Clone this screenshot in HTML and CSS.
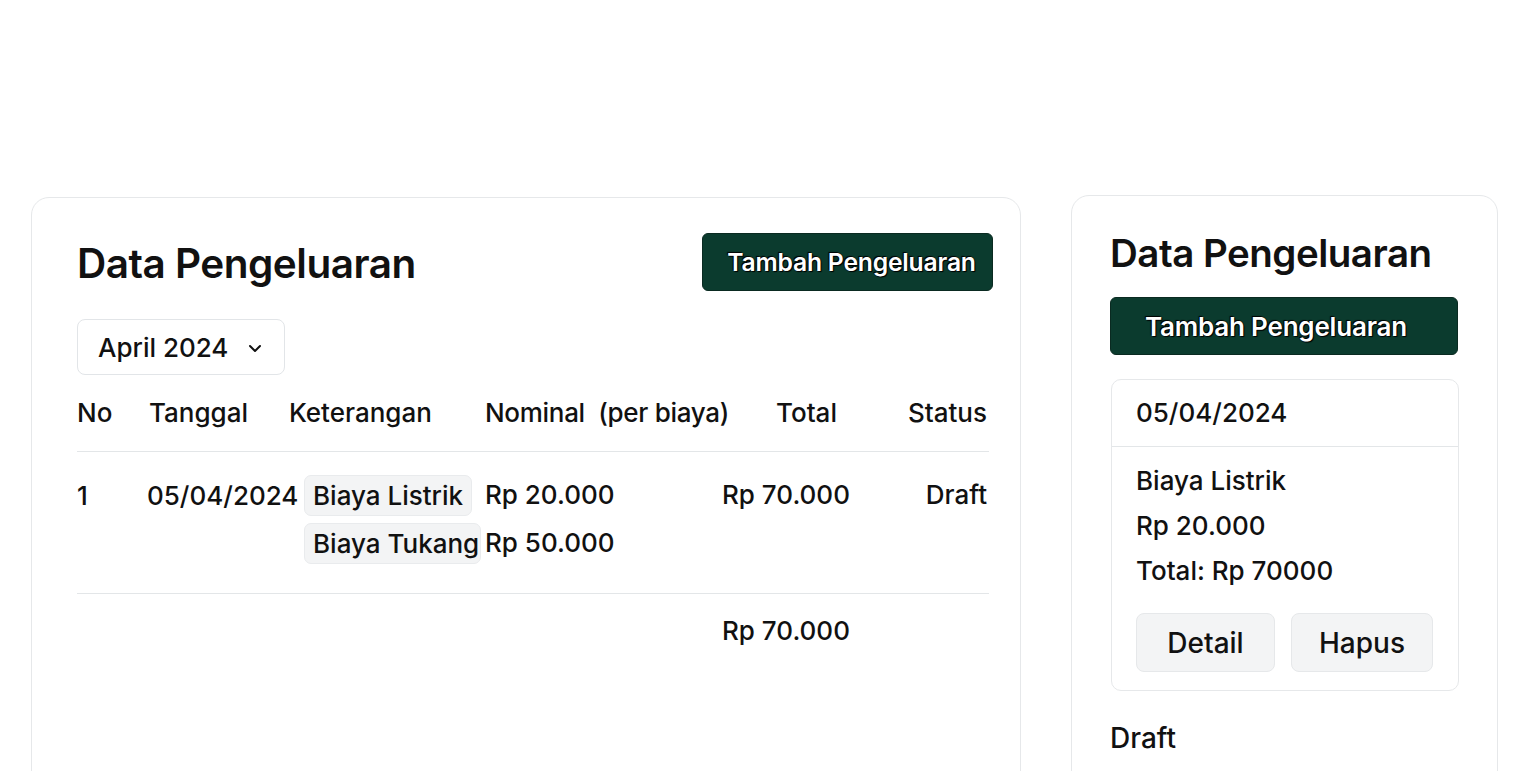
FILE: index.html
```html
<!DOCTYPE html>
<html lang="id">
<head>
<meta charset="utf-8">
<title>Data Pengeluaran</title>
<link rel="stylesheet" href="styles.css">
</head>
<body>
<div class="page">
  <section class="card main-card">
    <div class="card-head">
      <h1 class="title">Data Pengeluaran</h1>
      <button class="btn-primary">Tambah Pengeluaran</button>
    </div>
    <div class="month-select">
      <span>April 2024</span>
      <svg class="chev" width="18" height="18" viewBox="0 0 18 18"><path d="M4 7l5 5 5-5" fill="none" stroke="#111" stroke-width="2" stroke-linecap="round" stroke-linejoin="round"/></svg>
    </div>
    <table class="tbl">
      <colgroup>
        <col class="c-no"><col class="c-date"><col class="c-desc"><col class="c-nom"><col class="c-total"><col class="c-status">
      </colgroup>
      <thead>
        <tr>
          <th>No</th>
          <th>Tanggal</th>
          <th>Keterangan</th>
          <th class="th-nom">Nominal&nbsp; (per biaya)</th>
          <th class="th-total">Total</th>
          <th class="right">Status</th>
        </tr>
      </thead>
      <tbody>
        <tr class="row">
          <td>1</td>
          <td class="date">05/04/2024</td>
          <td class="desc">
            <span class="chip">Biaya Listrik</span>
            <span class="chip">Biaya Tukang</span>
          </td>
          <td class="nom">
            <div class="line">Rp 20.000</div>
            <div class="line">Rp 50.000</div>
          </td>
          <td class="total"><div class="line">Rp 70.000</div></td>
          <td class="right"><div class="line">Draft</div></td>
        </tr>
        <tr class="foot">
          <td></td><td></td><td></td><td></td>
          <td class="total">Rp 70.000</td>
          <td></td>
        </tr>
      </tbody>
    </table>
  </section>

  <aside class="card side-card">
    <h2 class="title side-title">Data Pengeluaran</h2>
    <button class="btn-primary btn-wide">Tambah Pengeluaran</button>
    <div class="item">
      <div class="item-date">05/04/2024</div>
      <div class="item-body">
        <div class="item-line">Biaya Listrik</div>
        <div class="item-line">Rp 20.000</div>
        <div class="item-line">Total: Rp 70000</div>
        <div class="item-actions">
          <button class="btn-soft btn-detail">Detail</button>
          <button class="btn-soft btn-hapus">Hapus</button>
        </div>
      </div>
    </div>
    <div class="side-status">Draft</div>
  </aside>
</div>
</body>
</html>
```

FILE: styles.css
```css
* { box-sizing: border-box; }
html, body { margin: 0; padding: 0; background: #fff; }
body {
  font-family: Inter, "Noto Sans", "Liberation Sans", sans-serif;
  color: #111;
  overflow: hidden;
}
.page {
  display: flex;
  align-items: flex-start;
  gap: 50px;
  padding: 195px 0 0 31px;
}
.card {
  background: #fff;
  border: 1px solid #e6e8ea;
  border-radius: 18px;
}
.main-card {
  width: 990px;
  height: 620px;
  padding: 35px 27px 0 45px;
  margin-top: 2px;
}
.card-head {
  display: flex;
  align-items: center;
  justify-content: space-between;
}
.title {
  margin: 0;
  font-size: 40.5px;
  font-weight: 600;
  letter-spacing: -0.5px;
  padding-top: 2px;
}
.btn-primary {
  font-family: inherit;
  background: #0b3b2e;
  border: 1px solid #0a2a21;
  border-radius: 6px;
  color: #fff;
  font-size: 24.7px;
  font-weight: 600;
  height: 58px;
  width: 291px;
  padding: 0 0 0 8px;
  text-shadow: 0 0 1px #000, 1px 1px 1px #000, -1px -1px 1px #000;
  letter-spacing: -0.2px;
}
.month-select {
  margin-top: 28px;
  width: 208px;
  height: 56px;
  border: 1px solid #e2e5e8;
  border-radius: 8px;
  display: flex;
  align-items: center;
  padding: 0 20px 0 20px;
  justify-content: space-between;
  font-size: 26px;
  font-weight: 500;
}
.chev { margin-top: 2px; }
.tbl {
  margin-top: 14px;
  border-collapse: collapse;
  table-layout: fixed;
  width: 912px;
  font-size: 26px;
  font-weight: 500;
}
.c-no { width: 72px; }
.c-date { width: 140px; }
.c-desc { width: 196px; }
.c-nom { width: 237px; }
.c-total { width: 140px; }
.c-status { width: 127px; }
.tbl th {
  text-align: left;
  font-weight: 500;
  height: 62px;
  padding: 0 0 14px 0;
  border-bottom: 1px solid #e3e6e8;
  white-space: nowrap;
}
.tbl th.th-nom { letter-spacing: -0.3px; }
.tbl th.right { padding-right: 2px; }
.tbl td { padding: 0; vertical-align: top; white-space: nowrap; }
.th-total { padding-left: 54px !important; }
.right { text-align: right !important; }
.row td { padding-top: 23px; padding-bottom: 17px; border-bottom: 1px solid #e3e6e8; }
.row td:first-child, .row td.date, .row td.total, .row td.right, .row td.nom { padding-top: 28px; }
.row td.right { padding-right: 2px; }
.row td.date { text-indent: -2px; }
.line { height: 48px; line-height: 30px; }
.desc { padding-left: 15px !important; padding-right: 4px !important; }
.chip {
  display: block;
  max-width: 100%;
  width: fit-content;
  height: 41px;
  line-height: 40px;
  padding: 0 8px;
  background: #f3f4f5;
  border: 1px solid #e9ebed;
  border-radius: 7px;
  margin-bottom: 7px;
  overflow: visible;
}
.foot td { padding-top: 21px; }
.side-card {
  width: 427px;
  height: 600px;
  padding: 32px 38px 0 38px;
}
.side-title { font-size: 38.5px; }
.btn-wide {
  margin-top: 21px;
  width: 348px;
  height: 58px;
  text-align: left;
  padding-left: 34px;
  font-size: 26px;
}
.item {
  margin-top: 24px;
  margin-left: 1px;
  width: 348px;
  border: 1px solid #e6e8ea;
  border-radius: 10px;
  font-size: 26px;
  font-weight: 500;
}
.item-date {
  height: 67px;
  padding: 17px 0 0 24px;
  border-bottom: 1px solid #e3e6e8;
}
.item-body { padding: 15px 24px 18px 24px; }
.item-line { height: 45px; line-height: 38px; }
.item-actions { display: flex; gap: 16px; margin-top: 16px; }
.btn-soft {
  font-family: inherit;
  font-size: 28px;
  font-weight: 500;
  color: #111;
  background: #f3f4f5;
  border: 1px solid #e6e8ea;
  border-radius: 8px;
  height: 59px;
  padding: 0;
}
.btn-detail { width: 139px; }
.btn-hapus { width: 142px; }
.side-status {
  margin-top: 30px;
  font-size: 28px;
  font-weight: 500;
}
```
